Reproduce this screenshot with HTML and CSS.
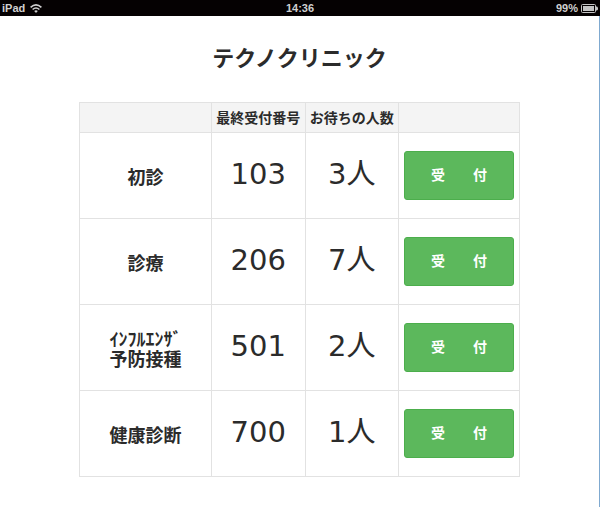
FILE: index.html
```html
<!DOCTYPE html>
<html lang="ja">
<head>
  <meta charset="UTF-8">
  <meta name="viewport" content="width=device-width, initial-scale=1.0">
  <title>テクノクリニック</title>
  <link rel="stylesheet" href="styles.css">
</head>
<body>
  <header class="status-bar">
    <div class="status-left">
      <span>iPad</span>
      <svg class="wifi" viewBox="0 0 12 9" width="12" height="9" aria-hidden="true">
        <path d="M0.6 3.4 Q6 -1.6 11.4 3.4" />
        <path d="M2.6 5.5 Q6 2.5 9.4 5.5" />
        <path class="wifi-dot" d="M4.2 7 Q6 5.7 7.8 7 L6 8.9 Z" />
      </svg>
    </div>
    <div class="status-time">14:36</div>
    <div class="status-right">
      <span>99%</span>
      <svg class="battery" viewBox="0 0 17 9" width="17" height="9" aria-hidden="true">
        <rect class="battery-case" x="0.5" y="0.5" width="14" height="8" rx="1" />
        <rect class="battery-level" x="2" y="2" width="11" height="5" />
        <path class="battery-level" d="M15 2.5 h1 l1 1 v2 l-1 1 h-1 Z" />
      </svg>
    </div>
  </header>

  <main class="page">
    <h1>テクノクリニック</h1>

    <table class="reception">
      <colgroup>
        <col class="col-name">
        <col class="col-number">
        <col class="col-number">
        <col class="col-action">
      </colgroup>
      <thead>
        <tr>
          <td></td>
          <th scope="col">最終受付番号</th>
          <th scope="col">お待ちの人数</th>
          <td></td>
        </tr>
      </thead>
      <tbody>
        <tr>
          <th scope="row">初診</th>
          <td class="number">103</td>
          <td class="number">3人</td>
          <td class="action"><button type="button" class="btn">受　　付</button></td>
        </tr>
        <tr>
          <th scope="row">診療</th>
          <td class="number">206</td>
          <td class="number">7人</td>
          <td class="action"><button type="button" class="btn">受　　付</button></td>
        </tr>
        <tr>
          <th scope="row"><span class="two-lines">ｲﾝﾌﾙｴﾝｻﾞ<br>予防接種</span></th>
          <td class="number">501</td>
          <td class="number">2人</td>
          <td class="action"><button type="button" class="btn">受　　付</button></td>
        </tr>
        <tr>
          <th scope="row">健康診断</th>
          <td class="number">700</td>
          <td class="number">1人</td>
          <td class="action"><button type="button" class="btn">受　　付</button></td>
        </tr>
      </tbody>
    </table>
  </main>
</body>
</html>
```

FILE: styles.css
```css
* {
  box-sizing: border-box;
}

body {
  margin: 0;
  background-color: #fff;
  color: #2b2b2b;
  font-family: "Liberation Sans", "Noto Sans CJK JP", sans-serif;
}

/* status bar */
.status-bar {
  display: grid;
  grid-template-columns: 1fr auto 1fr;
  align-items: center;
  height: 16px;
  padding: 0 2px;
  background-color: #050102;
  color: #d0d0d0;
  font-size: 11px;
  font-weight: bold;
  line-height: 16px;
}

.status-left,
.status-right {
  display: flex;
  align-items: center;
  gap: 5px;
}

.status-right {
  justify-content: flex-end;
  gap: 3px;
}

.wifi {
  fill: none;
  stroke: #d0d0d0;
  stroke-width: 1.6;
}

.wifi-dot {
  fill: #d0d0d0;
  stroke: none;
}

.battery-case {
  fill: none;
  stroke: #c4c4c4;
}

.battery-level {
  fill: #c4c4c4;
}

/* page */
.page {
  min-height: 490px;
  padding: 27px 79px 30px;
  border-right: 1px solid #7fa9d0;
}

h1 {
  margin: 0 0 27px;
  font-size: 22px;
  line-height: 32px;
  text-align: center;
}

.reception {
  width: 100%;
  border-collapse: collapse;
  table-layout: fixed;
}

.col-name {
  width: 30%;
}

.col-action {
  width: 121px;
}

.reception th,
.reception td {
  padding: 0;
  border: 1px solid #e2e2e2;
  text-align: center;
  white-space: nowrap;
}

.reception thead {
  background-color: #f4f4f4;
}

.reception thead th {
  height: 30px;
  font-size: 14px;
  line-height: 20px;
}

.reception tbody tr {
  height: 86px;
}

.reception tbody th {
  padding-top: 4px;
  font-size: 18px;
  line-height: 20px;
}

.two-lines {
  display: inline-block;
  text-align: left;
}

.reception .number {
  padding-bottom: 4px;
  font-family: "DejaVu Sans", "Noto Sans CJK JP", sans-serif;
  font-size: 29px;
  line-height: 40px;
}

.reception .action {
  padding: 0 5px;
}

.btn {
  display: block;
  width: 100%;
  height: 49px;
  padding: 0 0 4px;
  border: 1px solid #4cae4c;
  border-radius: 3px;
  background-color: #5cb85c;
  color: #fff;
  font-family: inherit;
  font-size: 14px;
  font-weight: bold;
  cursor: pointer;
}

.btn:hover {
  background-color: #47a447;
}
```
